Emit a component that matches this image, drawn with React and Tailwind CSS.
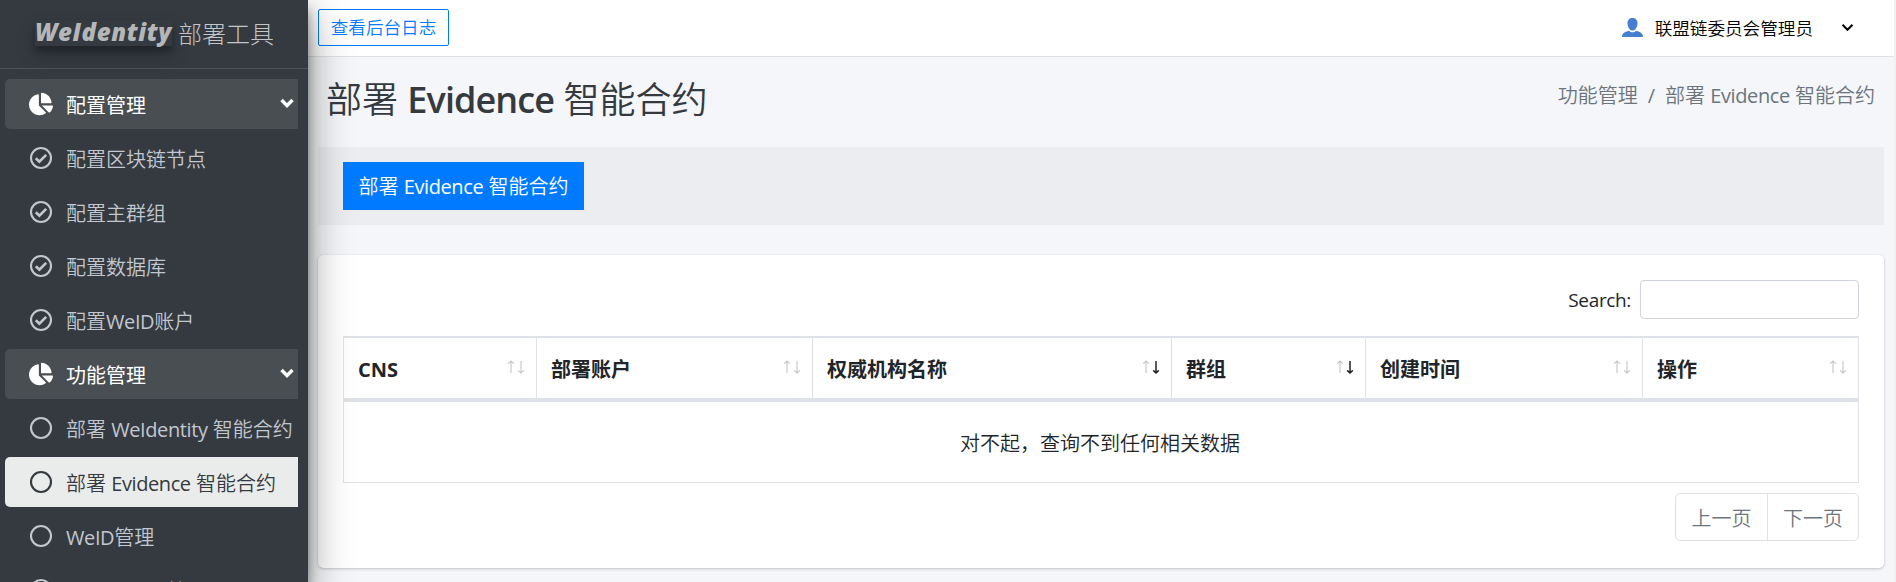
import { FaChartPie } from "react-icons/fa";

const fontStack = "font-['Open_Sans','Noto_Sans_CJK_SC',sans-serif]";

function L({ className = "font-normal tracking-[-0.4px]", children }) {
  return <span className={className}>{children}</span>;
}

function CheckCircle() {
  return (
    <svg viewBox="0 0 24 24" className="h-6 w-6" fill="none" stroke="currentColor">
      <circle cx="12" cy="12" r="10" strokeWidth="2.1" />
      <path d="M6.8 12.2l3.6 3.5 6.8-6.8" strokeWidth="2.7" />
    </svg>
  );
}

function Ring() {
  return (
    <svg viewBox="0 0 24 24" className="h-6 w-6" fill="none" stroke="currentColor">
      <circle cx="12" cy="12" r="10" strokeWidth="2.1" />
    </svg>
  );
}

function Chevron({ className, width }) {
  return (
    <svg viewBox="0 0 14 10" className={className} fill="none" stroke="currentColor" strokeWidth={width}>
      <path d="M1.5 2l5.500 5.500L12.500 2" />
    </svg>
  );
}

function NavItem({ kind, active, children }) {
  const tone =
    kind === "group"
      ? "bg-[#494e52] text-white"
      : active
        ? "bg-[#eaeceb] font-[350] text-[#343a40]"
        : "font-[350] text-[#c2c7d0]";
  return (
    <div className={`flex h-[50px] shrink-0 items-center rounded-l-[5px] ${tone}`}>
      <span className="ml-6 flex w-6 justify-center">
        {kind === "group" && <FaChartPie className="h-6 w-6" />}
        {kind === "check" && <CheckCircle />}
        {kind === "ring" && <Ring />}
      </span>
      <span className="ml-[13px] mt-1 whitespace-nowrap text-xl">{children}</span>
      {kind === "group" && <Chevron className="mb-[3px] ml-auto mr-1 h-[10px] w-[14px]" width="3.4" />}
    </div>
  );
}

function Sort({ desc }) {
  return (
    <svg viewBox="0 0 18 14" className="mb-[3px] h-[14px] w-[18px]" fill="none">
      <path d="M4 13V1M1.2 3.6L4 1l2.8 2.6" stroke="#c4c5c6" strokeWidth="1.1" />
      <path d="M14 1v12M11.2 10.4L14 13l2.8-2.6" stroke={desc ? "#212529" : "#c4c5c6"} strokeWidth={desc ? 1.5 : 1.1} />
    </svg>
  );
}

const columns = [
  ["CNS", "w-[193px]"],
  ["部署账户", "w-[276px]"],
  ["权威机构名称", "w-[359px]", true],
  ["群组", "w-[194px]", true],
  ["创建时间", "w-[277px]"],
  ["操作", "w-[215px]"],
];

export default function App() {
  return (
    <div className={`flex h-[582px] w-[1896px] overflow-hidden bg-[#f4f6f9] text-[#212529] ${fontStack}`}>
      <aside className="z-10 flex w-[308px] shrink-0 flex-col overflow-hidden bg-[#343a40] shadow-[0_14px_40px_rgba(0,0,0,0.45),0_10px_10px_rgba(0,0,0,0.35)]">
        <div className="flex h-[69px] shrink-0 items-center border-b border-[#4b545c] pl-[35px] text-[#c4c5c6]">
          <span className="mb-[3px] flex h-[26px] w-[137px] items-center text-2xl font-extrabold italic text-[#b5b6b8] shadow-[0_10px_20px_rgba(0,0,0,0.19),0_6px_6px_rgba(0,0,0,0.23)]">
            <L className="mb-[2px] tracking-[0.6px]">WeIdentity</L>
          </span>
          <span className="mb-px ml-[6px] text-2xl font-light">部署工具</span>
        </div>
        <nav className="flex flex-col gap-1 pl-[5px] pr-[10px] pt-[10px]">
          <NavItem kind="group">配置管理</NavItem>
          <NavItem kind="check">配置区块链节点</NavItem>
          <NavItem kind="check">配置主群组</NavItem>
          <NavItem kind="check">配置数据库</NavItem>
          <NavItem kind="check">配置<L>WeID</L>账户</NavItem>
          <NavItem kind="group">功能管理</NavItem>
          <NavItem kind="ring">部署 <L>WeIdentity</L> 智能合约</NavItem>
          <NavItem kind="ring" active>部署 <L>Evidence</L> 智能合约</NavItem>
          <NavItem kind="ring"><L>WeID</L>管理</NavItem>
          <NavItem kind="ring"><L>Issuer Type</L>管理</NavItem>
        </nav>
      </aside>

      <div className="flex w-[1586px] shrink-0 flex-col">
        <header className="flex h-[57px] shrink-0 items-center border-b border-[#dee2e6] bg-white pl-[10px]">
          <button className="mb-[2px] h-[37px] w-[131px] rounded-[2px] border border-[#007bff] text-[17.6px] font-[350] text-[#007bff]">查看后台日志</button>
          <div className="ml-auto flex items-center text-black">
            <svg viewBox="0 0 21 19" className="h-[19px] w-[21px]" fill="#467fcf">
              <path d="M10.5 0c3 0 5 2 5 5.200 0 3.400-2 7.300-5 7.300s-5-3.900-5-7.300C5.500 2 7.500 0 10.500 0zM0 19c0-4 2.500-5 7-6.300 1 1 2.200 1.500 3.500 1.500s2.500-.5 3.500-1.500c4.500 1.300 7 2.300 7 6.300z" />
            </svg>
            <span className="ml-3 text-[17.6px] font-[350]">联盟链委员会管理员</span>
            <Chevron className="ml-7 mr-10 h-[9px] w-[13px]" width="2.2" />
          </div>
        </header>

        <main className="flex flex-col pl-[10px] pr-[10px]">
          <div className="flex h-[90px] items-start justify-between pl-2 pr-[9px] pt-[16px]">
            <h1 className="text-4xl font-[350] leading-[54px] text-[#343a40]">
              部署 <L className="font-semibold tracking-[-0.9px]">Evidence</L> 智能合约
            </h1>
            <div className="mt-[8px] flex text-xl font-[350] leading-[30px] text-[#6c757d]">
              <span>功能管理</span>
              <span className="mx-[10px] font-normal">/</span>
              <span>部署 <L>Evidence</L> 智能合约</span>
            </div>
          </div>

          <div className="flex h-[78px] items-center bg-[#ebedf0] pl-[25px]">
            <button className="h-12 w-[241px] bg-[#007bff] pt-[2px] text-xl font-[350] text-white">部署 <L>Evidence</L> 智能合约</button>
          </div>

          <section className="mt-[30px] flex h-[313px] flex-col rounded-[5px] bg-white px-[25px] pt-[25px] shadow-[0_0_1px_rgba(0,0,0,0.125),0_1px_3px_rgba(0,0,0,0.2)]">
            <label className="flex h-[39px] items-center justify-end text-[19px]">
              <L className="mt-[2px] tracking-[-0.35px]">Search:</L>
              <input className="ml-[9px] h-[39px] w-[219px] rounded-[4px] border border-[#ced4da] bg-white outline-none" />
            </label>
            <div className="mt-[17px] flex flex-col border border-t-2 border-[#dee2e6]">
              <div className="flex h-16 border-b-4 border-[#dee2e6]">
                {columns.map(([name, width, desc]) => (
                  <div key={name} className={`flex shrink-0 items-center justify-between border-r border-[#dee2e6] pl-[14px] pr-[11px] text-xl font-bold last:border-r-0 ${width}`}>
                    <span className="mt-1">{name}</span>
                    <Sort desc={desc} />
                  </div>
                ))}
              </div>
              <div className="flex h-20 items-center justify-center pr-[2px] pt-[3px] text-xl font-[350]">对不起，查询不到任何相关数据</div>
            </div>
            <div className="ml-auto mt-[10px] flex h-12 w-[184px] rounded-[5px] border border-[#dee2e6] text-xl font-[350] text-[#6c757d]">
              <div className="flex w-[92px] items-center justify-center border-r border-[#dee2e6] pt-[3px]">上一页</div>
              <div className="flex flex-1 items-center justify-center pt-[3px]">下一页</div>
            </div>
          </section>
        </main>
      </div>
      <div className="w-[2px] bg-[#f1f1f1]" />
    </div>
  );
}
